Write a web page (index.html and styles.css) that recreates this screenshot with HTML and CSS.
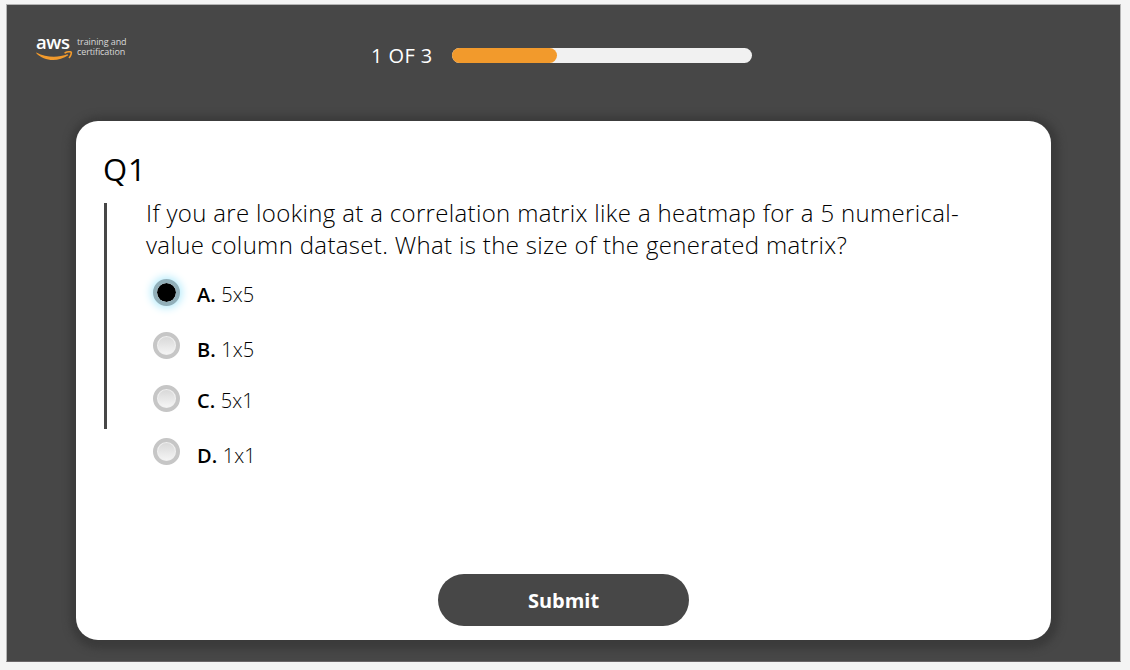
FILE: index.html
```html
<!DOCTYPE html>
<html lang="en">
<head>
<meta charset="utf-8">
<title>Knowledge check</title>
<link rel="stylesheet" href="styles.css">
</head>
<body>
<main class="stage">
  <header class="header">
    <div class="logo">
      <div class="brand">
        <span class="brand-name">aws</span>
        <svg class="smile" width="37" height="10" viewBox="0 0 37 10">
          <path d="M.4 1.500C10 6.700 22 7 31.500 3.300L32.300 4.300C22 11.300 8 10.500.1 2Z" fill="#f29a2c"/>
          <path d="M29.200 1.800C31.500.6 34.700.500 35.200 1.200S34.800 4.800 33.400 6.500" fill="none" stroke="#f29a2c" stroke-width="1.600" stroke-linecap="round" stroke-linejoin="round"/>
        </svg>
      </div>
      <div class="tagline"><span>training and</span><span>certification</span></div>
    </div>
    <div class="progress">
      <span class="progress-label">1 OF 3</span>
      <div class="track"><div class="fill"></div></div>
    </div>
  </header>
  <section class="card">
    <h1 class="number">Q1</h1>
    <div class="body">
      <div class="rule"></div>
      <div class="content">
        <p class="question"><span class="line">If you are looking at a correlation matrix like a heatmap for a 5 numerical-</span><span class="line">value column dataset. What is the size of the generated matrix?</span></p>
        <div class="options">
          <label class="option selected"><span class="radio"></span><span class="text"><b>A.</b> 5x5</span></label>
          <label class="option lowered"><span class="radio"></span><span class="text"><b>B.</b> 1x5</span></label>
          <label class="option"><span class="radio"></span><span class="text"><b>C.</b> 5x1</span></label>
          <label class="option lowered"><span class="radio"></span><span class="text"><b>D.</b> 1x1</span></label>
        </div>
      </div>
    </div>
    <button class="submit">Submit</button>
  </section>
</main>
</body>
</html>
```
FILE: styles.css
```css
* { box-sizing: border-box; }
body {
  margin: 0;
  padding: 4px 9px 8px 6px;
  height: 670px;
  background: #f4f4f4;
  font-family: "Open Sans", "Noto Sans", sans-serif;
  color: #000;
  overflow: hidden;
}
.stage {
  height: 658px;
  border: 1px solid #b4b4b4;
  border-bottom-color: #6a6668;
  background: #474747;
  padding: 0 69px;
}
.header {
  height: 116px;
  margin: 0 -69px;
  padding: 28px 0 0 29px;
  display: flex;
  align-items: flex-start;
}
.logo { display: flex; width: 335px; color: #fff; }
.brand { width: 41px; height: 28px; display: flex; flex-direction: column; }
.brand-name {
  height: 18px;
  line-height: 18px;
  font-size: 18.500px;
  font-weight: 600;
  letter-spacing: -0.4px;
}
.smile { display: block; flex: none; }
.tagline {
  padding-top: 4px;
  display: flex;
  flex-direction: column;
  font-size: 9px;
  line-height: 10px;
  letter-spacing: -0.1px;
  color: #d8d8d8;
  white-space: nowrap;
}
.progress { display: flex; padding-top: 7px; color: #fff; }
.progress-label {
  width: 81px;
  font-size: 20px;
  line-height: 31px;
  letter-spacing: 0.4px;
  font-weight: 500;
  white-space: nowrap;
}
.track {
  width: 300px;
  height: 15px;
  margin-top: 8px;
  border-radius: 8px;
  background: #f1f1f1;
}
.fill { width: 35%; height: 100%; border-radius: 8px; background: #f29a2c; }
.card {
  width: 975px;
  height: 519px;
  border-radius: 22px;
  background: #fff;
  box-shadow: 1px 2px 7px 7px #3b3b3b;
  padding: 25px 27px 14px;
  display: flex;
  flex-direction: column;
}
.number {
  margin: 0;
  height: 57px;
  font-size: 31px;
  line-height: 46px;
  font-weight: 450;
  letter-spacing: 1px;
}
.body { height: 371px; display: flex; flex: none; }
.rule { width: 3px; height: 226px; margin: 0 39px 0 1px; background: #474747; }
.question {
  margin: -6px 0 0;
  font-size: 24px;
  line-height: 32px;
  font-weight: 300;
  letter-spacing: 0.33px;
}
.line { display: block; white-space: nowrap; }
.options { margin: 18px 0 0 7px; }
.option { display: flex; height: 53px; }
.radio {
  width: 27px;
  height: 27px;
  border-radius: 50%;
  border: 4px solid #c6c6c6;
  background: linear-gradient(#d7d7d7, #f6f6f6) padding-box;
  box-shadow: inset 0 0 0 1px #f1f1f1;
  margin-right: 17px;
}
.selected .radio {
  border-color: #91afb9;
  background: #000;
  background-clip: padding-box;
  box-shadow: 0 0 8px 2px #b4ebfb;
}
.text {
  padding-top: 2px;
  font-size: 20px;
  line-height: 27px;
  font-weight: 300;
  letter-spacing: 0.1px;
  white-space: nowrap;
}
.lowered .text { padding-top: 4px; }
.text b { font-weight: 550; }
.submit {
  align-self: center;
  width: 251px;
  height: 52px;
  border: 0;
  border-radius: 26px;
  background: #474747;
  color: #fff;
  font: 700 20px/54px "Open Sans", sans-serif;
  padding: 0;
}
```
